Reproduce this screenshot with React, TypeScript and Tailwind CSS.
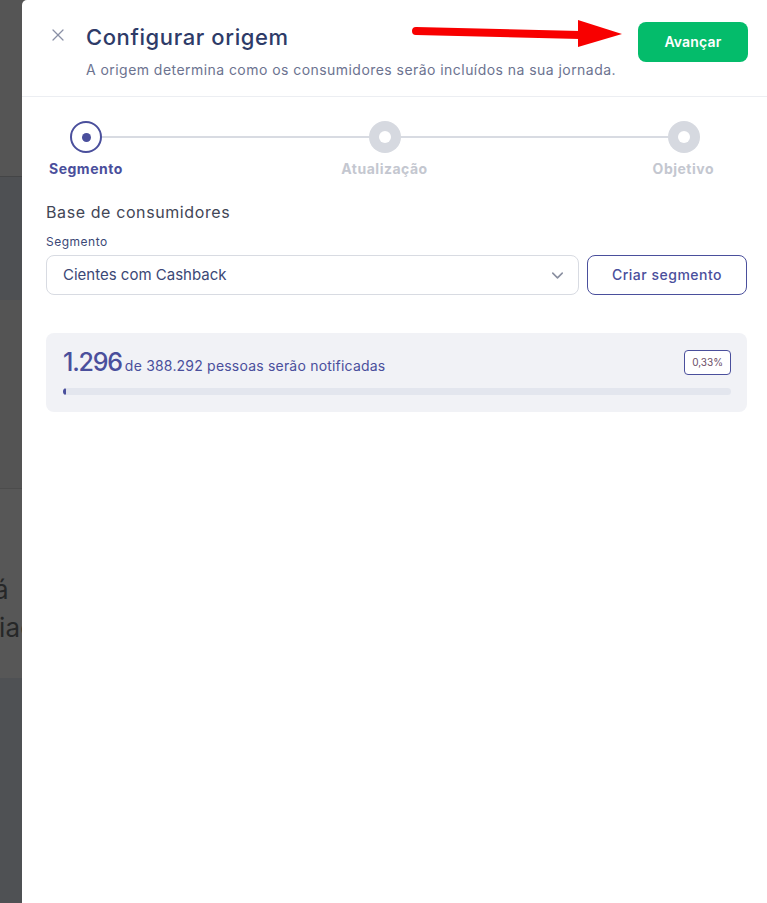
import { ChevronDown, X } from "lucide-react";

const font = { fontFamily: "Inter, 'Noto Sans', sans-serif" };

function Step({ active }: { active?: boolean }) {
  if (active) {
    return (
      <div className="w-8 h-8 rounded-full border-2 border-[#4a4f9c] bg-white flex items-center justify-center shrink-0">
        <div className="w-[9px] h-[9px] rounded-full bg-[#4a4f9c]" />
      </div>
    );
  }
  return (
    <div className="w-8 h-8 rounded-full bg-[#d6d9e0] flex items-center justify-center shrink-0">
      <div className="w-3 h-3 rounded-full bg-white" />
    </div>
  );
}

function SideStrip() {
  return (
    <div className="w-[22px] shrink-0 flex flex-col overflow-hidden">
      <div className="h-[177px] bg-[#555555] border-b border-[#444546]" />
      <div className="h-[123px] bg-[#4e5053]" />
      <div className="h-[189px] bg-[#545454] border-b border-[#4c4c4c]" />
      <div className="h-[189px] bg-[#575757] flex flex-col text-[26px] leading-[38px] text-[#262728] whitespace-nowrap pt-[82px]">
        <span className="ml-[-6px]">á</span>
        <span className="ml-[-1px]">iac</span>
      </div>
      <div className="flex-1 bg-[#4f5154]" />
    </div>
  );
}

export default function App() {
  const total = 388292;
  const reached = 1296;
  const percent = (reached / total) * 100;

  return (
    <div className="relative flex min-h-[903px] w-full bg-[#555555] tracking-[0.2px]" style={font}>
      <SideStrip />

      <div className="flex-1 bg-white rounded-tl-[5px] flex flex-col">
        {/* header */}
        <div className="flex items-start justify-between pl-[26px] pr-[19px] pt-[22px] pb-4 border-b border-[#eceef2]">
          <div className="flex gap-[18px]">
            <X className="mt-[3px] text-[#8a90a6]" size={20} strokeWidth={1.5} />
            <div>
              <h1 className="text-[22px] leading-[30px] font-medium tracking-[0.6px] text-[#2e3b68]">
                Configurar origem
              </h1>
              <p className="mt-2 text-sm leading-5 tracking-[0.45px] text-[#6c7390]">
                A origem determina como os consumidores serão incluídos na sua jornada.
              </p>
            </div>
          </div>
          <button className="h-10 w-[110px] rounded-lg bg-[#04bc6b] text-white text-sm font-semibold">
            Avançar
          </button>
        </div>

        <div className="pl-6 pr-5">
          {/* stepper */}
          <div className="pt-6 pl-[3px] pr-[33px]">
            <div className="flex items-center pl-[21px] pr-[14px]">
              <Step active />
              <div className="flex-1 h-[2px] bg-[#d8dbe2]" />
              <Step />
              <div className="flex-1 h-[2px] bg-[#d8dbe2]" />
              <Step />
            </div>
            <div className="mt-[6px] grid grid-cols-3 text-sm leading-5 font-bold tracking-[0.5px]">
              <span className="text-left text-[#4a4f9c]">Segmento</span>
              <span className="text-center text-[#c4c7d0] pl-[6px]">Atualização</span>
              <span className="text-right text-[#c4c7d0]">Objetivo</span>
            </div>
          </div>

          <h2 className="mt-[21px] text-base leading-6 tracking-[0.6px] text-[#424656]">Base de consumidores</h2>
          <label className="block mt-[10px] text-xs leading-4 tracking-[0.5px] text-[#3b4876]">Segmento</label>

          <div className="mt-[5px] flex gap-2">
            <div className="flex-1 h-10 rounded-lg border border-[#d8dbe2] flex items-center justify-between pl-4 pr-[11px]">
              <span className="text-[15px] tracking-normal text-[#3b4876]">Cientes com Cashback</span>
              <ChevronDown className="text-[#8a8fa0]" size={19} strokeWidth={2} />
            </div>
            <button className="h-10 w-[160px] rounded-lg border border-[#4a4f9c] text-sm font-medium tracking-[0.5px] text-[#4a4f9c]">
              Criar segmento
            </button>
          </div>

          <div className="mt-[38px] rounded-lg bg-[#f1f2f6] pl-[17px] pr-4 pt-[17px] pb-[17px]">
            <div className="flex items-center justify-between h-[25px]">
              <p className="text-[#4a4f9c] flex items-baseline gap-[3px]">
                <span className="text-[25px] font-medium leading-none tracking-[-1.2px]">1.296</span>
                <span className="text-sm">de 388.292 pessoas serão notificadas</span>
              </p>
              <span className="h-[25px] px-[7px] flex items-center rounded border border-[#4a4f9c] bg-white text-[10px] tracking-normal text-[#6a4d66]">
                0,33%
              </span>
            </div>
            <div className="mt-[13px] h-[7px] rounded-full bg-[#e3e6ee] overflow-hidden">
              <div className="h-full rounded-full bg-[#4a4f9c] min-w-[3px]" style={{ width: `${percent}%` }} />
            </div>
          </div>
        </div>
      </div>

      {/* annotation arrow */}
      <svg className="absolute left-[410px] top-[16px]" width="220" height="36" viewBox="0 0 220 36">
        <path d="M6 15 L170 19" stroke="#f80000" strokeWidth="8" strokeLinecap="round" />
        <polygon points="168,4 212,18 168,31" fill="#f80000" />
      </svg>
    </div>
  );
}
